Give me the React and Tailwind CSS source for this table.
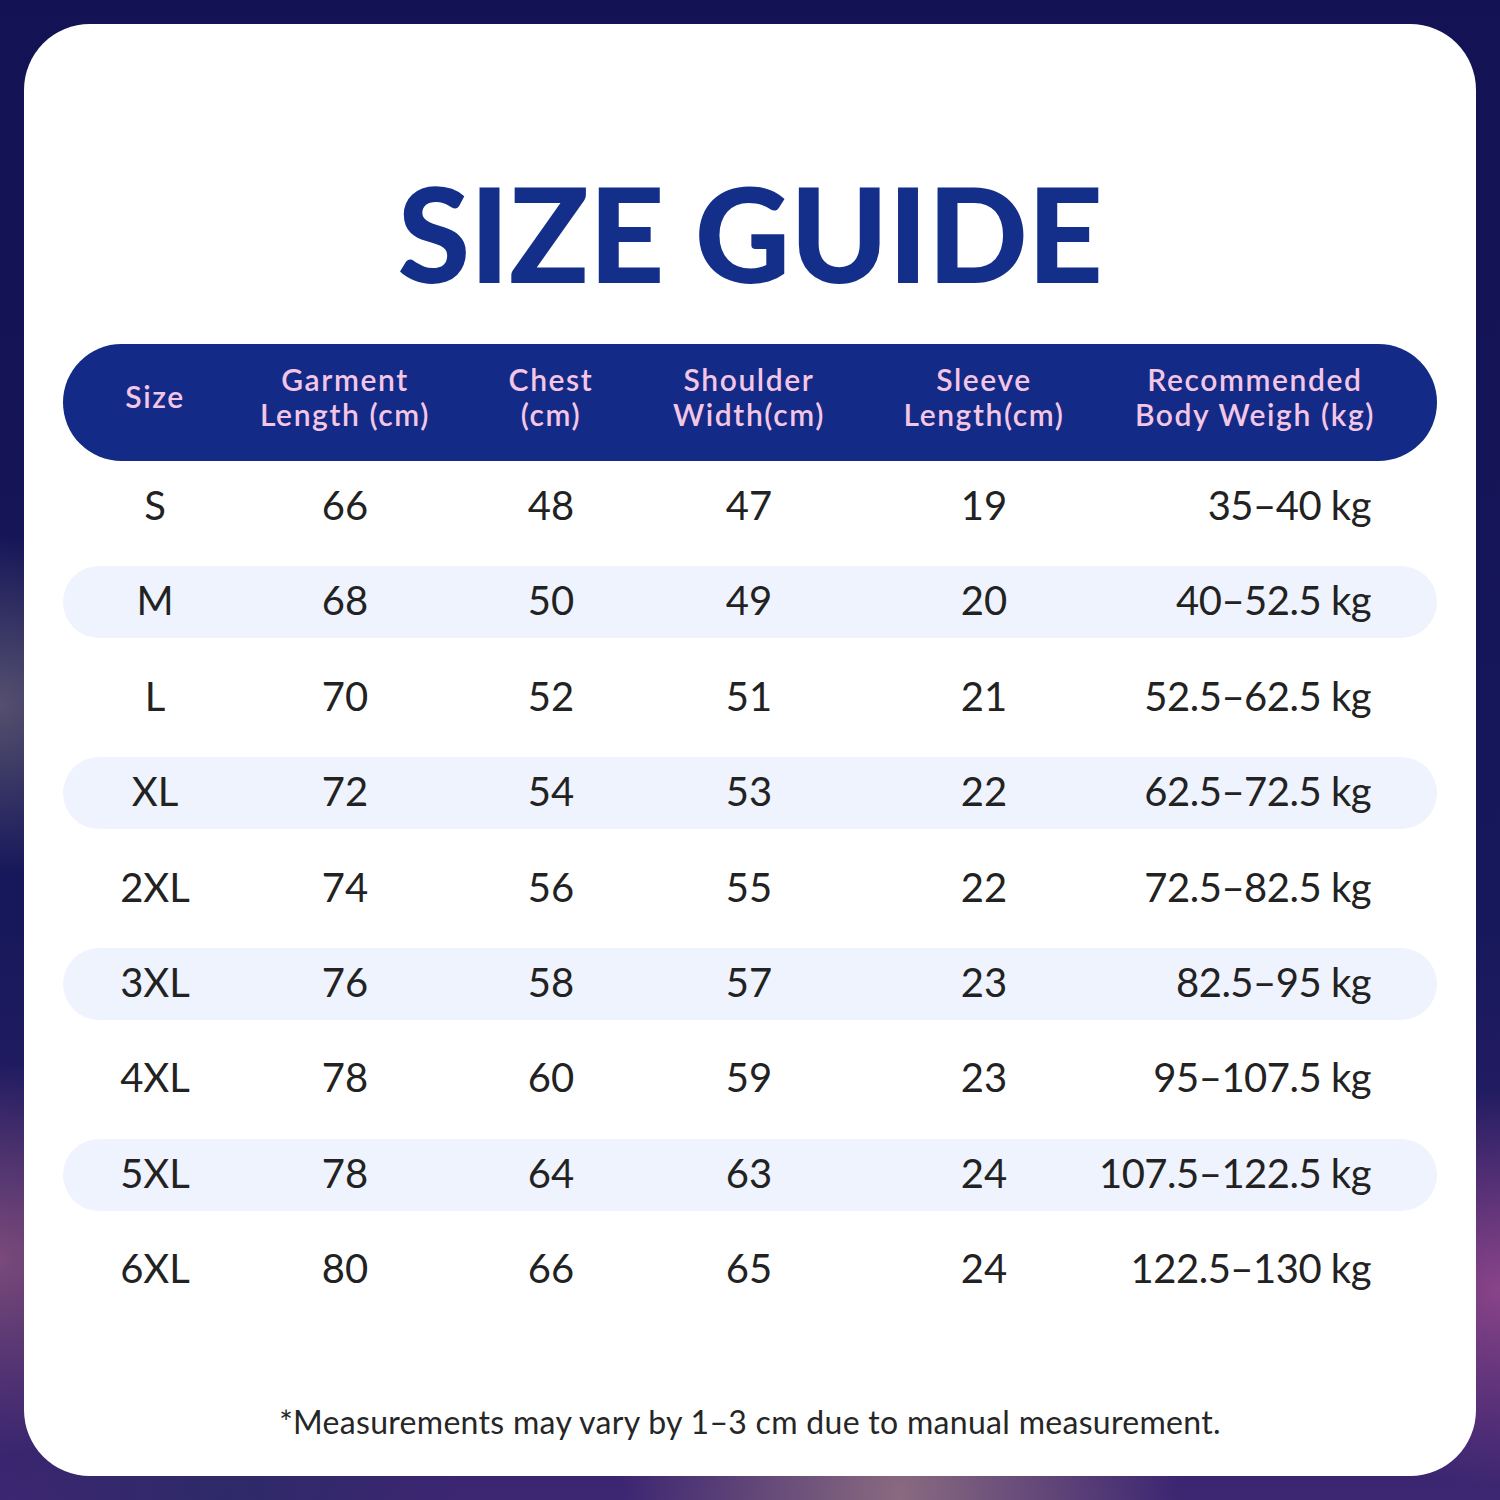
const ROWS = [
  ['S', '66', '48', '47', '19', '35–40 kg'],
  ['M', '68', '50', '49', '20', '40–52.5 kg'],
  ['L', '70', '52', '51', '21', '52.5–62.5 kg'],
  ['XL', '72', '54', '53', '22', '62.5–72.5 kg'],
  ['2XL', '74', '56', '55', '22', '72.5–82.5 kg'],
  ['3XL', '76', '58', '57', '23', '82.5–95 kg'],
  ['4XL', '78', '60', '59', '23', '95–107.5 kg'],
  ['5XL', '78', '64', '63', '24', '107.5–122.5 kg'],
  ['6XL', '80', '66', '65', '24', '122.5–130 kg'],
]

const COLS = 'grid grid-cols-[184px_196px_216px_180px_290px_1fr] items-center'

export default function App() {
  return (
    <div className="w-[1500px] h-[1500px] p-[24px] bg-[radial-gradient(circle_at_100%_86%,#8a4488_0%,transparent_10%),radial-gradient(ellipse_at_60%_100%,#8a6a80_0%,transparent_22%),radial-gradient(circle_at_0%_47%,#55506e_0%,transparent_10%),radial-gradient(circle_at_0%_84%,#7a4a7a_0%,transparent_10%),radial-gradient(circle_at_15%_100%,#2e2a68_0%,transparent_12%),linear-gradient(180deg,#121255_0%,#17185b_62%,#3d2672_100%)] font-['Lato','Noto_Sans',sans-serif]">
      <div className="w-full h-full bg-white rounded-[66px] px-[39px] pt-[142px] flex flex-col">
        <h1 className="text-center text-[132px] leading-none font-black text-[#142f8a] tracking-[-0.5px]">
          SIZE GUIDE
        </h1>

        {/* header bar */}
        <div className={`${COLS} mt-[46px] h-[117px] pb-[12px] rounded-full bg-[#132b86] text-[#f4c6e6] text-[30px] leading-[35px] font-semibold tracking-[1.6px] whitespace-nowrap`}>
          <div className="text-center">Size</div>
          <div className="text-center">Garment<br />Length (cm)</div>
          <div className="text-center">Chest<br />(cm)</div>
          <div className="text-center">Shoulder<br />Width(cm)</div>
          <div className="text-center">Sleeve<br />Length(cm)</div>
          <div className="flex justify-end pr-[62px]">
            <div className="text-center">Recommended<br />Body Weigh (kg)</div>
          </div>
        </div>

        <div className="mt-[10px] flex flex-col gap-[23.4px]">
          {ROWS.map((r, i) => (
            <div
              key={r[0]}
              className={`${COLS} h-[72px] pb-[4px] rounded-full text-[40px] text-[#222] whitespace-nowrap ${i % 2 === 1 ? 'bg-[#eff3fd]' : ''}`}
            >
              <div className="text-center">{r[0]}</div>
              <div className="text-center">{r[1]}</div>
              <div className="text-center">{r[2]}</div>
              <div className="text-center">{r[3]}</div>
              <div className="text-center">{r[4]}</div>
              <div className="flex justify-end pr-[66px] min-w-0">
                <span className="shrink-0 tracking-[-0.5px]">{r[5]}</span>
              </div>
            </div>
          ))}
        </div>

        <p className="mt-[98px] text-center text-[32px] leading-[36px] tracking-[0.3px] text-[#262626]">
          *Measurements may vary by 1–3 cm due to manual measurement.
        </p>
      </div>
    </div>
  )
}
